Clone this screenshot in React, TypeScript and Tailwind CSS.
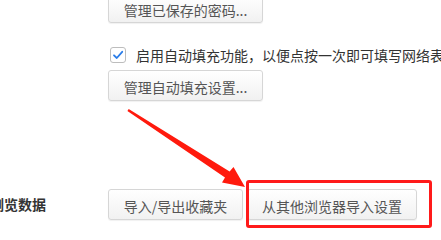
import React from "react";

const btn =
  "shrink-0 rounded-[3px] border border-[#d6d6d6] bg-gradient-to-b from-[#ffffff] to-[#f1f1f1] text-[14px] leading-none text-[#555555] whitespace-nowrap flex items-center justify-center pt-[2px] shadow-[0_1px_1px_rgba(0,0,0,0.06)]";

export default function App() {
  return (
    <div
      className="relative w-[441px] h-[236px] overflow-hidden bg-white"
      style={{ fontFamily: '"Noto Sans CJK SC", "Noto Sans", sans-serif' }}
    >
      <div className="pl-[108px] flex flex-col items-start">
        <button className={`${btn} w-[155px] h-[28px] mt-[-5px]`}>管理已保存的密码...</button>
        <label className="mt-[24px] ml-[2px] h-[16px] flex items-center gap-[10px] whitespace-nowrap text-[14px] text-[#333333]">
          <span className="w-[16px] h-[16px] shrink-0 rounded-[3px] border border-[#bdbdbd] bg-white flex items-center justify-center">
            <svg width="12" height="12" viewBox="0 0 12 12">
              <path d="M2 6.3 L4.8 9 L10.2 2.8" fill="none" stroke="#2b7de9" strokeWidth="1.8" strokeLinecap="round" strokeLinejoin="round" />
            </svg>
          </span>
          <span>启用自动填充功能，以便点按一次即可填写网络表单</span>
        </label>
        <button className={`${btn} w-[155px] h-[31px] mt-[7px]`}>管理自动填充设置...</button>
      </div>

      <div className="mt-[88px] flex items-center">
        <span className="w-[118px] ml-[-10px] shrink-0 text-[14px] font-bold text-[#333333] whitespace-nowrap">浏览数据</span>
        <button className={`${btn} w-[135px] h-[31px]`}>导入/导出收藏夹</button>
        <div className="relative ml-[4px]">
          <button className={`${btn} w-[170px] h-[31px]`}>从其他浏览器导入设置</button>
          <div className="absolute left-[-1px] top-[-9px] right-[-15px] bottom-[-8px] border-[3.5px] border-[#ff1a1a] rounded-[3px] pointer-events-none" />
        </div>
      </div>

      <svg className="absolute inset-0 pointer-events-none" width="441" height="236" viewBox="0 0 441 236">
        <polygon
          points="127.4,110.9 128.7,109.1 229.6,171.4 233.5,167 245,187 222,182.5 225,177.6"
          fill="#ff1a0d"
        />
      </svg>
    </div>
  );
}
